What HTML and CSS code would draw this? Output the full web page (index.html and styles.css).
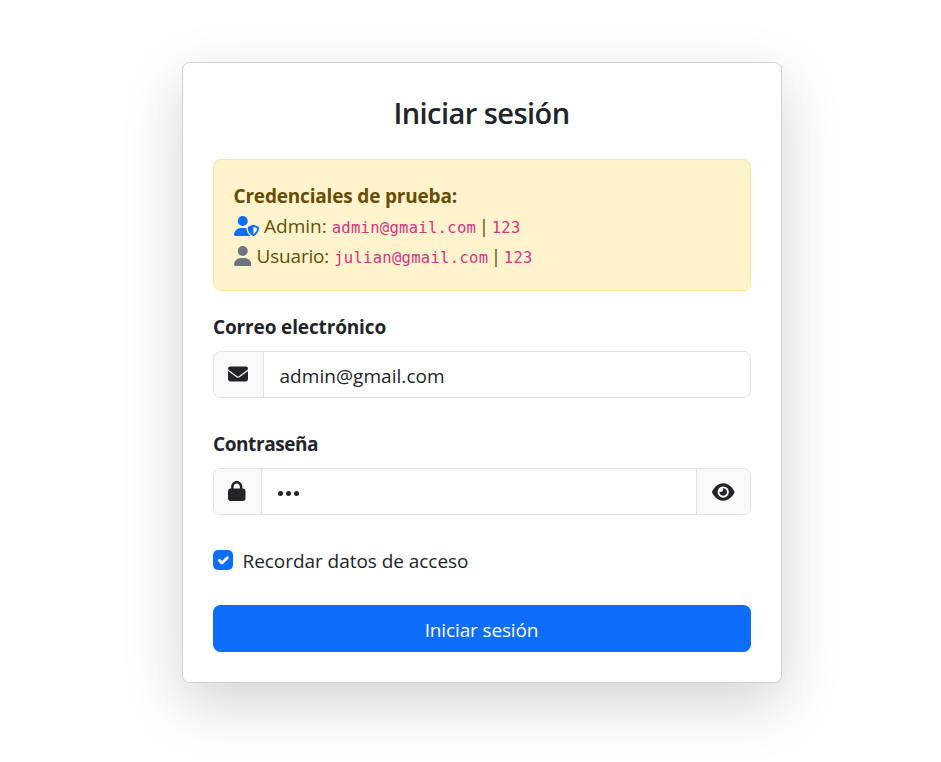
FILE: index.html
```html
<!DOCTYPE html>
<html lang="es">
<head>
<meta charset="utf-8">
<title>Iniciar sesión</title>
<link rel="stylesheet" href="styles.css">
</head>
<body>
<main class="card">
  <h1 class="title">Iniciar sesión</h1>
  <div class="alert">
    <strong>Credenciales de prueba:</strong>
    <div class="cred">
      <svg class="icon-admin" viewBox="0 0 640 512"><path d="M224 256A128 128 0 1 0 224 0a128 128 0 1 0 0 256zm-45.700 48C79.800 304 0 383.800 0 482.300C0 498.700 13.300 512 29.700 512H418.300c1.800 0 3.500-.200 5.300-.500c-76.300-55.100-99.800-141-103.100-200.200c-16.100-4.800-33.100-7.300-50.700-7.300H178.300zm308.800-78.300l-120 48C358 277.400 352 286.200 352 296c0 63.300 25.900 168.800 134.800 214.200c5.900 2.500 12.600 2.500 18.500 0C614.100 464.800 640 359.300 640 296c0-9.800-6-18.600-15.100-22.300l-120-48c-5.700-2.300-12.100-2.300-17.800 0zM591.400 312c-3.900 50.700-27.200 116.700-95.400 149.700V273.800L591.400 312z"/></svg>
      <span class="cred-name admin-name">Admin:</span><code>admin@gmail.com</code><span class="bar">|</span><code>123</code>
    </div>
    <div class="cred">
      <svg class="icon-user" viewBox="0 0 448 512"><path d="M224 256A128 128 0 1 0 224 0a128 128 0 1 0 0 256zm-45.700 48C79.800 304 0 383.800 0 482.300C0 498.700 13.300 512 29.700 512H418.300c16.400 0 29.700-13.300 29.700-29.700C448 383.800 368.200 304 269.700 304H178.300z"/></svg>
      <span class="cred-name user-name">Usuario:</span><code>julian@gmail.com</code><span class="bar">|</span><code>123</code>
    </div>
  </div>

  <label class="label label-mail" for="email">Correo electrónico</label>
  <div class="group">
    <span class="addon"><svg class="icon-mail" viewBox="0 0 512 512"><path d="M48 64C21.500 64 0 85.500 0 112c0 15.100 7.100 29.300 19.200 38.400L236.800 313.600c11.400 8.500 27 8.500 38.400 0L492.800 150.400c12.100-9.100 19.200-23.300 19.200-38.400c0-26.500-21.500-48-48-48H48zM0 176V384c0 35.300 28.700 64 64 64H448c35.300 0 64-28.700 64-64V176L294.400 339.200c-22.800 17.100-54 17.100-76.800 0L0 176z"/></svg></span>
    <input class="field email" id="email" type="text" value="admin@gmail.com">
  </div>

  <label class="label label-pass" for="password">Contraseña</label>
  <div class="group">
    <span class="addon"><svg class="icon-lock" viewBox="0 0 448 512"><path d="M144 144v48H304V144c0-44.200-35.800-80-80-80s-80 35.800-80 80zM80 192V144C80 64.500 144.500 0 224 0s144 64.500 144 144v48h16c35.300 0 64 28.700 64 64V448c0 35.300-28.700 64-64 64H64c-35.300 0-64-28.700-64-64V256c0-35.300 28.700-64 64-64H80z"/></svg></span>
    <div class="field password" id="password"><i></i><i></i><i></i></div>
    <button class="addon toggle" type="button" aria-label="Mostrar contraseña"><svg class="icon-eye" viewBox="0 0 576 512"><path d="M288 32c-80.800 0-145.500 36.800-192.600 80.600C48.600 156 17.300 208 2.500 243.700c-3.300 7.900-3.300 16.700 0 24.600C17.300 304 48.600 356 95.400 399.400C142.500 443.200 207.200 480 288 480s145.500-36.800 192.600-80.600c46.800-43.500 78.100-95.400 93-131.100c3.300-7.900 3.300-16.700 0-24.600c-14.900-35.700-46.200-87.700-93-131.100C433.500 68.800 368.800 32 288 32zM144 256a144 144 0 1 1 288 0a144 144 0 1 1-288 0zm144-64c0 35.300-28.700 64-64 64c-7.100 0-13.900-1.200-20.300-3.300c-5.500-1.800-11.900 1.600-11.700 7.400c.300 6.900 1.300 13.800 3.200 20.700c13.700 51.200 66.400 81.600 117.600 67.900s81.600-66.400 67.900-117.600c-11.100-41.500-47.800-69.400-88.600-71.100c-5.800-.200-9.200 6.100-7.400 11.700c2.100 6.400 3.300 13.200 3.300 20.300z"/></svg></button>
  </div>

  <div class="check">
    <span class="box"><svg viewBox="0 0 20 20"><path d="M6.300 10.300l2.700 2.700 5.300-5.300"/></svg></span>
    <span class="check-label">Recordar datos de acceso</span>
  </div>
  <button class="submit" type="button">Iniciar sesión</button>
</main>
</body>
</html>
```

FILE: styles.css
```css
* { box-sizing: border-box; }

body {
  margin: 0;
  padding: 62px 159px 0 182px;
  height: 762px;
  overflow: hidden;
  background: #fff;
  color: #212529;
  font: 19px/30px "Open Sans", "Noto Sans", sans-serif;
}

svg { display: block; fill: currentColor; }

.card {
  width: 600px;
  height: 621px;
  padding: 30px;
  border: 1px solid #d0d0d0;
  border-radius: 7.500px;
  background: #fff;
  box-shadow: 0 20px 60px rgba(0, 0, 0, .175);
}

.title {
  height: 36px;
  margin: 0 0 30px;
  padding-right: 1px;
  font-size: 29px;
  line-height: 39px;
  font-weight: 600;
  letter-spacing: -.55px;
  text-align: center;
}

.alert {
  height: 132px;
  margin-bottom: 20px;
  padding: 21px 20px 19px 19.500px;
  border: 1px solid #ffe69c;
  border-radius: 7.500px;
  background: #fff3cd;
  color: #664d03;
}

.alert strong { display: block; font-weight: 700; letter-spacing: -.18px; }
.cred { display: flex; height: 30px; white-space: pre; }
.cred svg { height: 20px; margin-top: 4.500px; flex: none; }
.icon-admin { width: 25px; color: #0d6efd; }
.icon-user { width: 17.500px; color: #6c757d; }
.cred-name { margin: 0 5px 0 5.500px; }
.user-name { letter-spacing: -.18px; }

code {
  color: #d63384;
  font: 15.500px/34px "DejaVu Sans Mono", monospace;
  letter-spacing: .3px;
}

.bar { width: 15.500px; text-align: center; }

.label {
  display: block;
  height: 30px;
  margin-bottom: 10px;
  line-height: 32px;
  font-weight: 700;
}
.label-mail { letter-spacing: -.14px; }
.label-pass { letter-spacing: -.42px; }

.group {
  display: flex;
  height: 47px;
  margin-bottom: 30px;
  border: 1px solid #dee2e6;
  border-radius: 7.500px;
  overflow: hidden;
}

.addon {
  display: flex;
  align-items: center;
  padding: 0 15px 1px 14.500px;
  border: 0;
  border-right: 1px solid #dee2e6;
  background: #f8f9fa;
  color: #212529;
}

.addon:first-child { padding-left: 14px; padding-right: 15px; }
.addon svg { height: 20px; }
.icon-mail { width: 20px; }
.icon-lock { width: 17.500px; }
.icon-eye { width: 22.500px; }
.toggle { padding: 0 15.500px 0 15px; border-right: 0; border-left: 1px solid #dee2e6; }

.field {
  flex: 1;
  min-width: 0;
  padding: 3px 15px 0;
  border: 0;
  outline: 0;
  background: #fff;
  color: #212529;
  font: inherit;
}
.email { padding-left: 15.500px; letter-spacing: .05px; }

.password { display: flex; align-items: center; gap: 3px; padding-left: 16.500px; }
.password i { width: 5px; height: 5px; border-radius: 50%; background: #212529; }

.check { display: flex; height: 30px; margin-bottom: 30px; gap: 9.500px; }
.check-label { line-height: 32px; letter-spacing: -.05px; }
.box { width: 20px; height: 20px; margin-top: 5px; border-radius: 5px; background: #0d6efd; }
.box path { fill: none; stroke: #fff; stroke-width: 2.800; stroke-linecap: round; stroke-linejoin: round; }

.submit {
  display: block;
  width: 100%;
  height: 47px;
  padding: 3px 1px 0 0;
  border: 0;
  border-radius: 7.500px;
  background: #0d6efd;
  color: #fff;
  font: inherit;
  letter-spacing: -.14px;
}
```
